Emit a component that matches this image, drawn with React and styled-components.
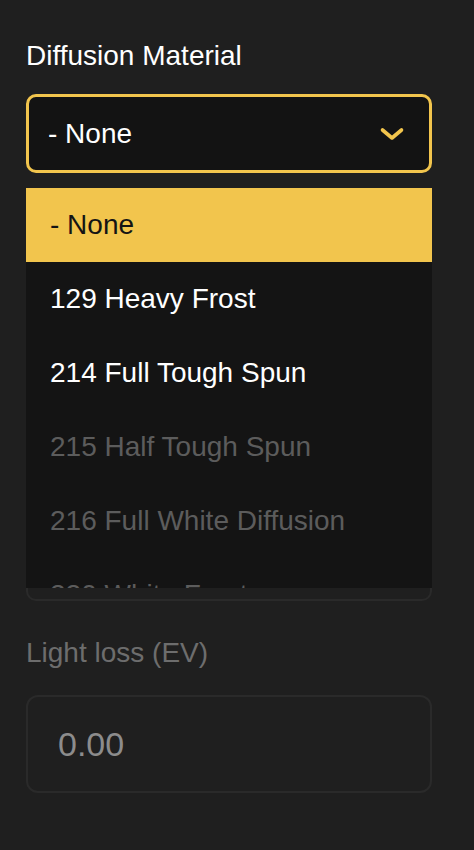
import React, { useState } from "react";
import styled, { createGlobalStyle } from "styled-components";

const options = [
  { name: "- None", enabled: true },
  { name: "129 Heavy Frost", enabled: true },
  { name: "214 Full Tough Spun", enabled: true },
  { name: "215 Half Tough Spun", enabled: false },
  { name: "216 Full White Diffusion", enabled: false },
  { name: "220 White Frost", enabled: false },
];

const ChevronDown = () => (
  <svg width="26" height="16" viewBox="0 0 26 16" fill="none">
    <path
      d="M3.5 4 L13 12 L22.5 4"
      stroke="#f2c54d"
      strokeWidth="3.6"
      strokeLinecap="round"
      strokeLinejoin="round"
    />
  </svg>
);

const App = () => {
  const [selected] = useState(0);

  return (
    <>
      <GlobalStyle />
      <Panel>
        <Field $gap={22}>
          <Label>Diffusion Material</Label>
          <SelectWrap>
            <SelectButton>
              <span>{options[selected].name}</span>
              <ChevronDown />
            </SelectButton>
            <Menu>
              {options.map((item, index) => (
                <Option
                  key={index}
                  $active={index === selected}
                  $enabled={item.enabled}
                >
                  {item.name}
                </Option>
              ))}
            </Menu>
          </SelectWrap>
        </Field>
        <Field $gap={22}>
          <Label>Diffusion Size</Label>
          <Box $height={79} />
        </Field>
        <Field $gap={22}>
          <Label>Notes</Label>
          <Box $height={169} />
        </Field>
        <Field $gap={26}>
          <Label $muted>Light loss (EV)</Label>
          <NumberInput type="text" value="0.00" readOnly />
        </Field>
      </Panel>
    </>
  );
};

const GlobalStyle = createGlobalStyle`
  html, body {
    margin: 0;
    padding: 0;
    background: #1f1f1f;
  }
  body {
    font-family: "Liberation Sans", Arial, Helvetica, sans-serif;
    overflow: hidden;
  }
`;

const Panel = styled.div`
  display: flex;
  flex-direction: column;
  gap: 36px;
  padding: 40px 42px 0 26px;
  min-height: 850px;
  box-sizing: border-box;
`;

const Field = styled.div`
  display: flex;
  flex-direction: column;
  gap: ${(p) => p.$gap}px;
`;

const Label = styled.div`
  font-size: 28px;
  line-height: 32px;
  color: ${(p) => (p.$muted ? "#6d6d6d" : "#ffffff")};
`;

const SelectWrap = styled.div`
  position: relative;
`;

const SelectButton = styled.div`
  height: 79px;
  box-sizing: border-box;
  border: 3px solid #f2c54d;
  border-radius: 10px;
  background: #131313;
  display: flex;
  align-items: center;
  justify-content: space-between;
  padding: 0 24px 0 19px;
  color: #ffffff;
  font-size: 28px;
  svg {
    display: block;
  }
`;

const Menu = styled.div`
  position: absolute;
  top: calc(100% + 15px);
  left: 0;
  right: 0;
  max-height: 400px;
  overflow: hidden;
  background: #141414;
  z-index: 10;
`;

const Option = styled.div`
  height: 74px;
  flex-shrink: 0;
  display: flex;
  align-items: center;
  padding-left: 24px;
  font-size: 28px;
  background: ${(p) => (p.$active ? "#f2c54d" : "transparent")};
  color: ${(p) =>
    p.$active ? "#141414" : p.$enabled ? "#ffffff" : "#5c5c5c"};
`;

const Box = styled.div`
  height: ${(p) => p.$height}px;
  box-sizing: border-box;
  border: 2px solid #2a2a2a;
  border-radius: 10px;
`;

const NumberInput = styled.input`
  height: 98px;
  box-sizing: border-box;
  width: 100%;
  border: 2px solid #2a2a2a;
  border-radius: 12px;
  background: #1f1f1f;
  padding: 0 0 0 30px;
  margin: 0;
  color: #8c8c8c;
  font-family: "Liberation Sans", Arial, sans-serif;
  font-size: 34px;
  outline: none;
`;

export default App;
